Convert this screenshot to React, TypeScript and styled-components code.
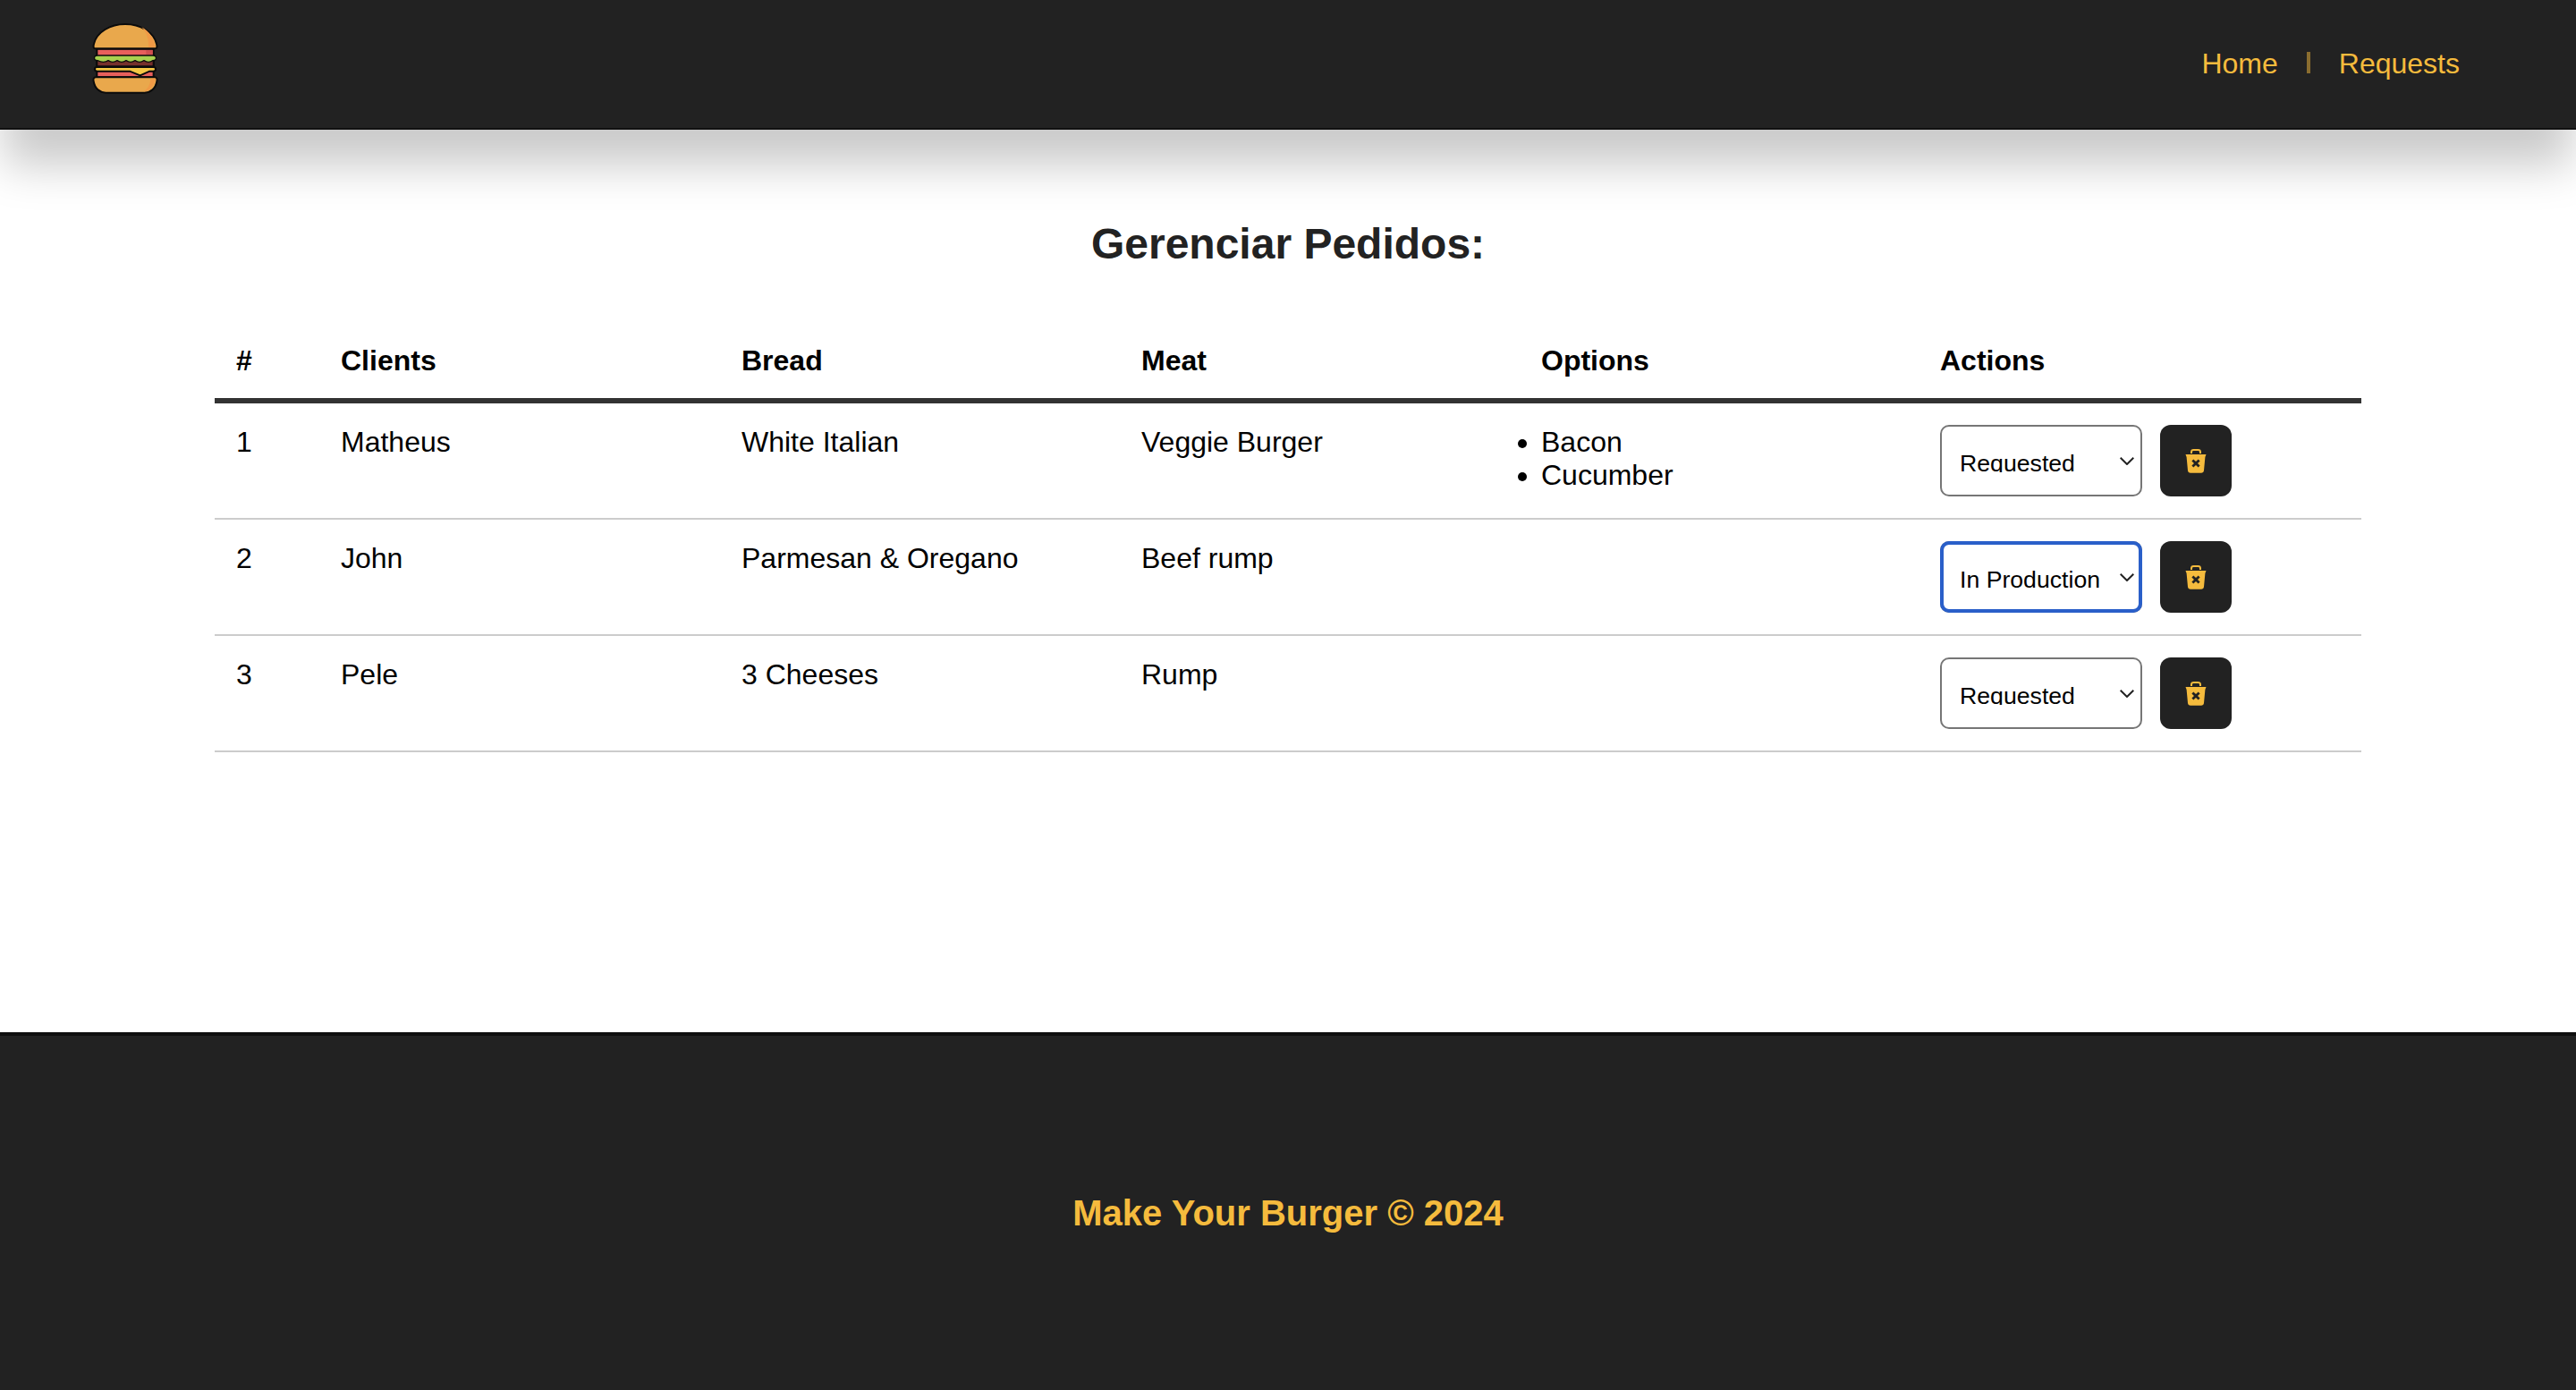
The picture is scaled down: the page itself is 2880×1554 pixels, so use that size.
import React from "react";
import styled, { createGlobalStyle } from "styled-components";

const GlobalStyle = createGlobalStyle`
  * { box-sizing: border-box; }
  body {
    margin: 0;
    font-family: "Liberation Sans", Arial, sans-serif;
    font-size: 32px;
    color: #000;
    background: #fff;
  }
`;

const Page = styled.div`
  display: flex;
  flex-direction: column;
  height: 1554px;
`;

const Navbar = styled.header`
  display: flex;
  justify-content: space-between;
  align-items: center;
  height: 145px;
  padding: 0 130px 0 100px;
  background: #222;
  border-bottom: 2px solid #111;
  box-shadow: 0 44px 50px -4px rgba(0, 0, 0, 0.21);
`;

const Logo = styled.svg`
  width: 80px;
  height: 85px;
  margin-bottom: 12px;
`;

const Nav = styled.nav`
  display: flex;
  align-items: center;
  gap: 32px;
`;

const NavLink = styled.a`
  color: #f5bb3d;
  text-decoration: none;
`;

const Separator = styled.span`
  width: 4px;
  height: 24px;
  margin-bottom: 4px;
  background: #8a6d2f;
`;

const Main = styled.main`
  flex: 1;
  padding: 100px 240px 0;
`;

const Title = styled.h2`
  margin: 0 0 60px;
  font-size: 48px;
  font-weight: 700;
  color: #222;
  text-align: center;
`;

const Table = styled.table`
  width: 2400px;
  table-layout: fixed;
  border-spacing: 0;
`;

const HeadCell = styled.th<{ $width?: number }>`
  width: ${(p) => (p.$width ? `${p.$width}px` : "auto")};
  padding: 25px 24px 23px;
  text-align: left;
  font-weight: 700;
  border-bottom: 6px solid #333;
`;

const Cell = styled.td`
  padding: 25px 24px 23px;
  vertical-align: top;
  border-bottom: 2px solid #ccc;
`;

const OptionList = styled.ul`
  margin: 0;
  padding: 0;
`;

const Actions = styled.div`
  display: flex;
  gap: 20px;
  margin: -1px 0 1px;
`;

const SelectBox = styled.div`
  position: relative;
  width: 226px;
  height: 80px;
`;

const StatusSelect = styled.select<{ $focused?: boolean }>`
  display: block;
  width: 100%;
  height: 100%;
  padding: 26px 20px 25px 20px;
  appearance: none;
  font-family: inherit;
  font-size: 26.67px;
  color: #000;
  background: #fff;
  border: 2px solid #767676;
  border-radius: 10px;
  outline: ${(p) => (p.$focused ? "4px solid #2a5fc9" : "none")};
  outline-offset: -4px;
`;

const Chevron = styled.svg`
  position: absolute;
  top: 36px;
  right: 9px;
  width: 16px;
  height: 9px;
  pointer-events: none;
`;

const DeleteButton = styled.button`
  display: flex;
  align-items: center;
  justify-content: center;
  width: 80px;
  height: 80px;
  padding: 0;
  background: #222;
  border: 0;
  border-radius: 12px;
`;

const TrashIcon = styled.svg`
  width: 24px;
  height: 27px;
`;

const Footer = styled.footer`
  display: flex;
  align-items: center;
  justify-content: center;
  height: 400px;
  background: #222;
  border-top: 4px solid #0f0f0f;
`;

const FooterText = styled.h3`
  margin: 0;
  font-size: 40px;
  font-weight: 700;
  color: #f5bb3d;
`;

const BurgerLogo = () => (
  <Logo viewBox="120 70 240 255">
    <g stroke="#0b0b0b" strokeWidth="6" strokeLinejoin="round">
      <path d="M145 165 H335 V260 H145 Z" fill="#e85f5c" />
      <path d="M145 200 H335 V224 H145 Z" fill="#76302c" />
      <path d="M146 226 H334 C345 226 345 240 334 240 H322 L290 254 L255 240 H146 C135 240 135 226 146 226 Z" fill="#f6c744" />
      <path
        strokeWidth="4"
        d="M147 187 H333 C347 187 347 204 333 204 Q318 214 303 204 Q288 214 273 204 Q258 214 243 204 Q228 214 213 204 Q198 214 183 204 Q168 214 147 204 C133 204 133 187 147 187 Z"
        fill="#a8d14f"
      />
      <path d="M140 164 C132 164 133 155 135 148 C145 108 190 82 240 82 C290 82 335 108 345 148 C347 155 348 164 340 164 Z" fill="#e9a84c" />
      <path d="M142 260 H338 C346 260 348 266 346 274 C342 298 325 312 305 312 H175 C155 312 138 298 134 274 C132 266 134 260 142 260 Z" fill="#e9a84c" />
    </g>
    <path d="M295 92 C320 105 338 130 341 160 H318 C320 135 312 110 295 92 Z" fill="#f09a46" />
    <path d="M325 264 H342 C340 285 325 305 302 308 C316 298 325 282 325 264 Z" fill="#f09a46" />
    <path d="M310 169 H332 V184 H310 Z" fill="#d14f50" />
  </Logo>
);

const Trash = () => (
  <TrashIcon viewBox="0 0 24 27">
    <path d="M7 5 V3.4 C7 1.8 8.2 1 9.5 1 H14.5 C15.8 1 17 1.8 17 3.4 V5" fill="none" stroke="#f5bb3d" strokeWidth="2" />
    <path
      fillRule="evenodd"
      fill="#f5bb3d"
      d="M0.5 6 H23.5 L22.4 9 L21 24 C20.8 25.8 19.6 26.8 18 26.8 H6 C4.4 26.8 3.2 25.8 3 24 L1.6 9 Z M9.3 11.5 L7.4 13.4 L10 16 L7.4 18.6 L9.3 20.5 L12 17.9 L14.7 20.5 L16.6 18.6 L14 16 L16.6 13.4 L14.7 11.5 L12 14.1 Z"
    />
  </TrashIcon>
);

type Order = {
  id: number;
  client: string;
  bread: string;
  meat: string;
  options: string[];
  status: string;
  focused?: boolean;
};

const orders: Order[] = [
  { id: 1, client: "Matheus", bread: "White Italian", meat: "Veggie Burger", options: ["Bacon", "Cucumber"], status: "Requested" },
  { id: 2, client: "John", bread: "Parmesan & Oregano", meat: "Beef rump", options: [], status: "In Production", focused: true },
  { id: 3, client: "Pele", bread: "3 Cheeses", meat: "Rump", options: [], status: "Requested" },
];

const statuses = ["Requested", "In Production", "Done"];

const App = () => {
  return (
    <Page>
      <GlobalStyle />
      <Navbar>
        <BurgerLogo />
        <Nav>
          <NavLink href="#">Home</NavLink>
          <Separator />
          <NavLink href="#">Requests</NavLink>
        </Nav>
      </Navbar>
      <Main>
        <Title>Gerenciar Pedidos:</Title>
        <Table>
          <thead>
            <tr>
              <HeadCell $width={117}>#</HeadCell>
              <HeadCell $width={448}>Clients</HeadCell>
              <HeadCell $width={447}>Bread</HeadCell>
              <HeadCell $width={447}>Meat</HeadCell>
              <HeadCell $width={446}>Options</HeadCell>
              <HeadCell>Actions</HeadCell>
            </tr>
          </thead>
          <tbody>
            {orders.map((order) => (
              <tr key={order.id}>
                <Cell>{order.id}</Cell>
                <Cell>{order.client}</Cell>
                <Cell>{order.bread}</Cell>
                <Cell>{order.meat}</Cell>
                <Cell>
                  <OptionList>
                    {order.options.map((option) => (
                      <li key={option}>{option}</li>
                    ))}
                  </OptionList>
                </Cell>
                <Cell>
                  <Actions>
                    <SelectBox>
                      <StatusSelect defaultValue={order.status} $focused={order.focused}>
                        {statuses.map((status) => (
                          <option key={status}>{status}</option>
                        ))}
                      </StatusSelect>
                      <Chevron viewBox="0 0 16 9">
                        <path d="M0.7 0.7 L8 8 L15.3 0.7" fill="none" stroke="#222" strokeWidth="2" />
                      </Chevron>
                    </SelectBox>
                    <DeleteButton>
                      <Trash />
                    </DeleteButton>
                  </Actions>
                </Cell>
              </tr>
            ))}
          </tbody>
        </Table>
      </Main>
      <Footer>
        <FooterText>Make Your Burger © 2024</FooterText>
      </Footer>
    </Page>
  );
};

export default App;
